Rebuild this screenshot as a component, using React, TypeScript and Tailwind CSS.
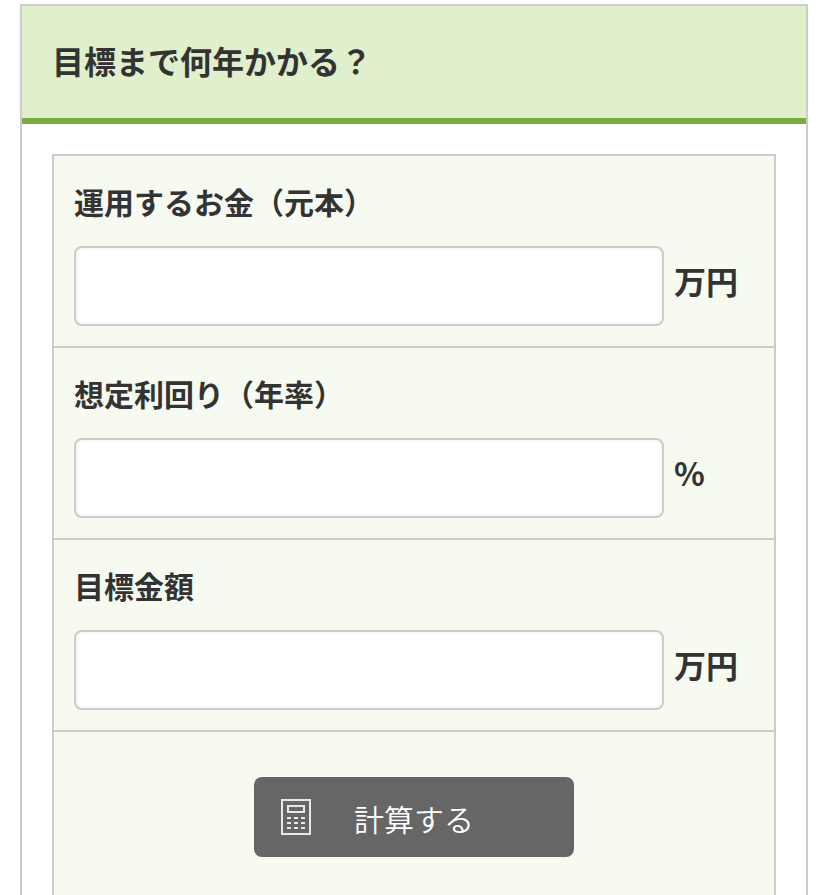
import { type ReactNode } from "react";

const rows = [
  { id: "principal", label: "運用するお金（元本）", unit: "万円" },
  { id: "rate", label: "想定利回り（年率）", unit: "%" },
  { id: "goal", label: "目標金額", unit: "万円" },
];

function CalcIcon() {
  return (
    <svg width="30" height="36" viewBox="0 0 30 36" fill="none" stroke="#e8e8e8" strokeWidth="2">
      <rect x="1" y="1" width="28" height="34" />
      <rect x="7" y="7" width="16" height="6" />
      <path d="M6 19h4M13 19h4M20 19h4M6 24h4M13 24h4M20 24h4M6 29h4M13 29h4M20 29h4" />
    </svg>
  );
}

function Row({ children }: { children: ReactNode }) {
  return <div className="h-[192px] border-b-2 border-[#cccccc] px-5 pt-[23px]">{children}</div>;
}

export default function App() {
  return (
    <div className="h-[895px] overflow-hidden bg-white px-5 pt-1 font-['Noto_Sans_CJK_JP',sans-serif] text-[#333333]">
      <section className="h-[920px] border-2 border-[#cccccc]">
        <h2 className="h-[118px] border-b-6 border-[#7aac45] bg-[#e0efcc] pl-[30px] pt-[30px] text-[32px] font-bold leading-[48px]">
          目標まで何年かかる？
        </h2>
        <div className="mx-[30px] mt-[30px] h-[760px] border-2 border-[#cccccc] bg-[#f7faf1]">
          {rows.map((row) => (
            <Row key={row.id}>
              <label htmlFor={row.id} className="block text-[30px] font-bold leading-[44px]">
                {row.label}
              </label>
              <div className="mt-[23px] flex items-center gap-2.5">
                <input
                  id={row.id}
                  className="h-20 w-[590px] rounded-lg border-2 border-[#cccccc] bg-white shadow-[inset_0_0_4px_rgba(0,0,0,0.08)]"
                />
                <span className="pb-3 text-[32px] font-bold leading-[48px]">{row.unit}</span>
              </div>
            </Row>
          ))}
          <div className="flex justify-center pt-[45px]">
            <button className="flex h-20 w-[320px] items-center rounded-lg bg-[#666666] pl-[27px] text-[30px] font-[350] text-white">
              <CalcIcon />
              <span className="ml-[43px] pt-0.5">計算する</span>
            </button>
          </div>
        </div>
      </section>
    </div>
  );
}
